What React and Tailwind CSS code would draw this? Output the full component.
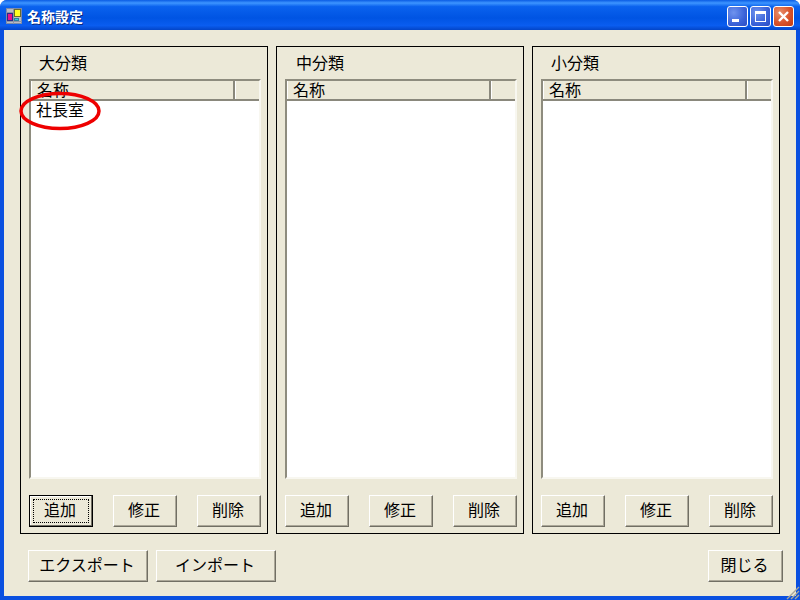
const jp = "font-['Noto_Sans_CJK_JP',sans-serif]";

function AppIcon() {
  return (
    <svg width="16" height="16" viewBox="0 0 16 16" shapeRendering="crispEdges" className="shrink-0">
      <rect x="0" y="0" width="16" height="16" fill="#b9bcc4" />
      <rect x="0.5" y="0.5" width="15" height="15" fill="none" stroke="#7b8aa8" />
      <path d="M0 4.5h7M0 13.5h16M7.5 0v16" stroke="#8a93a8" fill="none" />
      <rect x="1.5" y="5.5" width="5" height="7" fill="#e8108c" stroke="#2a2a8a" />
      <rect x="8" y="1.5" width="6.5" height="7" fill="#ffff20" stroke="#6a6a2a" />
      <rect x="8.5" y="10.5" width="4" height="2" fill="#30d0d8" stroke="#2a80a0" />
    </svg>
  );
}

function WinButton({ kind }) {
  const bg =
    kind === "close"
      ? "bg-[radial-gradient(circle_at_30%_30%,#e8906e,#d9532b_55%,#c23a12)]"
      : "bg-[radial-gradient(circle_at_30%_30%,#6f93ee,#3a62d8_60%,#2a4cc4)]";
  return (
    <div className={`w-[21px] h-[21px] rounded-[3px] border border-white ${bg} flex items-center justify-center`}>
      <svg width="19" height="19" viewBox="0 0 19 19" shapeRendering="crispEdges">
        {kind === "min" && <rect x="4" y="12" width="7" height="3" fill="#fff" />}
        {kind === "max" && (
          <g fill="none" stroke="#fff">
            <rect x="4.5" y="4.5" width="10" height="10" />
            <path d="M4 5.5h11M4 6.5h11" />
          </g>
        )}
        {kind === "close" && (
          <path d="M5 5l9 9M14 5l-9 9" stroke="#fff" strokeWidth="2.4" shapeRendering="auto" />
        )}
      </svg>
    </div>
  );
}

function Btn({ w, focused, children }) {
  if (focused) {
    return (
      <div className={`${w} h-8 bg-[#ece9d8] border border-black shadow-[inset_-1px_-1px_0_#716f64,inset_1px_1px_0_#fff] p-[3px]`}>
        <div className="h-full pb-[5px] pr-[2px] border border-dotted border-black flex items-center justify-center text-[16px] leading-none text-black">
          {children}
        </div>
      </div>
    );
  }
  return (
    <div className={`${w} h-8 pb-[5px] pr-[2px] bg-[#ece9d8] border-t border-l border-white border-r border-b border-r-[#716f64] border-b-[#716f64] shadow-[inset_-1px_-1px_0_#aca899] flex items-center justify-center text-[16px] leading-none text-black`}>
      {children}
    </div>
  );
}

function Panel({ title, pl, focused, row }) {
  return (
    <div className="w-[248px] h-[488px] border border-black pl-2 pr-[6px] flex flex-col">
      <div className={`h-8 pb-[3px] ${pl} flex items-center text-[16px] leading-none text-black`}>{title}</div>
      <div className="h-[400px] flex flex-col border-t-2 border-l-2 border-[#8e8c7e] border-r-2 border-b-2 border-r-[#f8f7f0] border-b-[#f8f7f0] bg-white">
        <div className="h-5 shrink-0 flex bg-[#ece9d8] border-b-2 border-[#8a887c]">
          <div className="w-[204px] pl-[5px] pb-[3px] border-r-2 border-r-[#8a887c] flex items-center text-[16px] leading-none text-black border-l border-l-white">
            名称
          </div>
          <div className="flex-1 border-l border-l-white" />
        </div>
        {row && <div className="pl-[5px] text-[16px] leading-[17px] text-black">{row}</div>}
      </div>
      <div className="mt-4 flex justify-between">
        <Btn w="w-16" focused={focused}>追加</Btn>
        <Btn w="w-16">修正</Btn>
        <Btn w="w-16">削除</Btn>
      </div>
    </div>
  );
}

export default function App() {
  return (
    <div className={`relative w-[800px] h-[600px] flex flex-col overflow-hidden rounded-t-[7px] bg-[#0a50e0] ${jp}`}>
      <div className="h-[30px] shrink-0 flex items-center pl-[6px] pr-[6px] pt-[2px] bg-[linear-gradient(to_bottom,#0a5ce4_0%,#3d95ff_10%,#0a62ee_22%,#0054e3_60%,#0a5df0_85%,#0345c8_100%)]">
        <AppIcon />
        <span className="ml-[5px] text-[14px] leading-none font-bold text-white [text-shadow:1px_1px_0_#0a2a80]">名称設定</span>
        <div className="ml-auto flex gap-[2px]">
          <WinButton kind="min" />
          <WinButton kind="max" />
          <WinButton kind="close" />
        </div>
      </div>
      <div className="mx-1 mb-1 flex-1 bg-[#ece9d8] pt-4 pl-4 flex flex-col">
        <div className="flex gap-2">
          <Panel title="大分類" pl="pl-[10px]" focused row="社長室" />
          <Panel title="中分類" pl="pl-[11px]" />
          <Panel title="小分類" pl="pl-[10px]" />
        </div>
        <div className="mt-4 ml-2 mr-[13px] flex gap-2">
          <Btn w="w-[120px]">エクスポート</Btn>
          <Btn w="w-[120px]">インポート</Btn>
          <div className="ml-auto">
            <Btn w="w-[75px]">閉じる</Btn>
          </div>
        </div>
      </div>
      {/* red marker drawn over the first row */}
      <svg className="absolute left-[19px] top-[91px]" width="83" height="40" viewBox="0 0 83 40">
        <ellipse cx="41" cy="20" rx="39" ry="17.5" fill="none" stroke="#ee0000" strokeWidth="3.5" />
      </svg>
      {/* size grip */}
      <svg className="absolute right-0 bottom-0" width="16" height="16" viewBox="0 0 16 16">
        <path d="M15 3L3 15M15 7L7 15M15 11L11 15" stroke="#a7a69a" strokeWidth="1.4" />
      </svg>
    </div>
  );
}
